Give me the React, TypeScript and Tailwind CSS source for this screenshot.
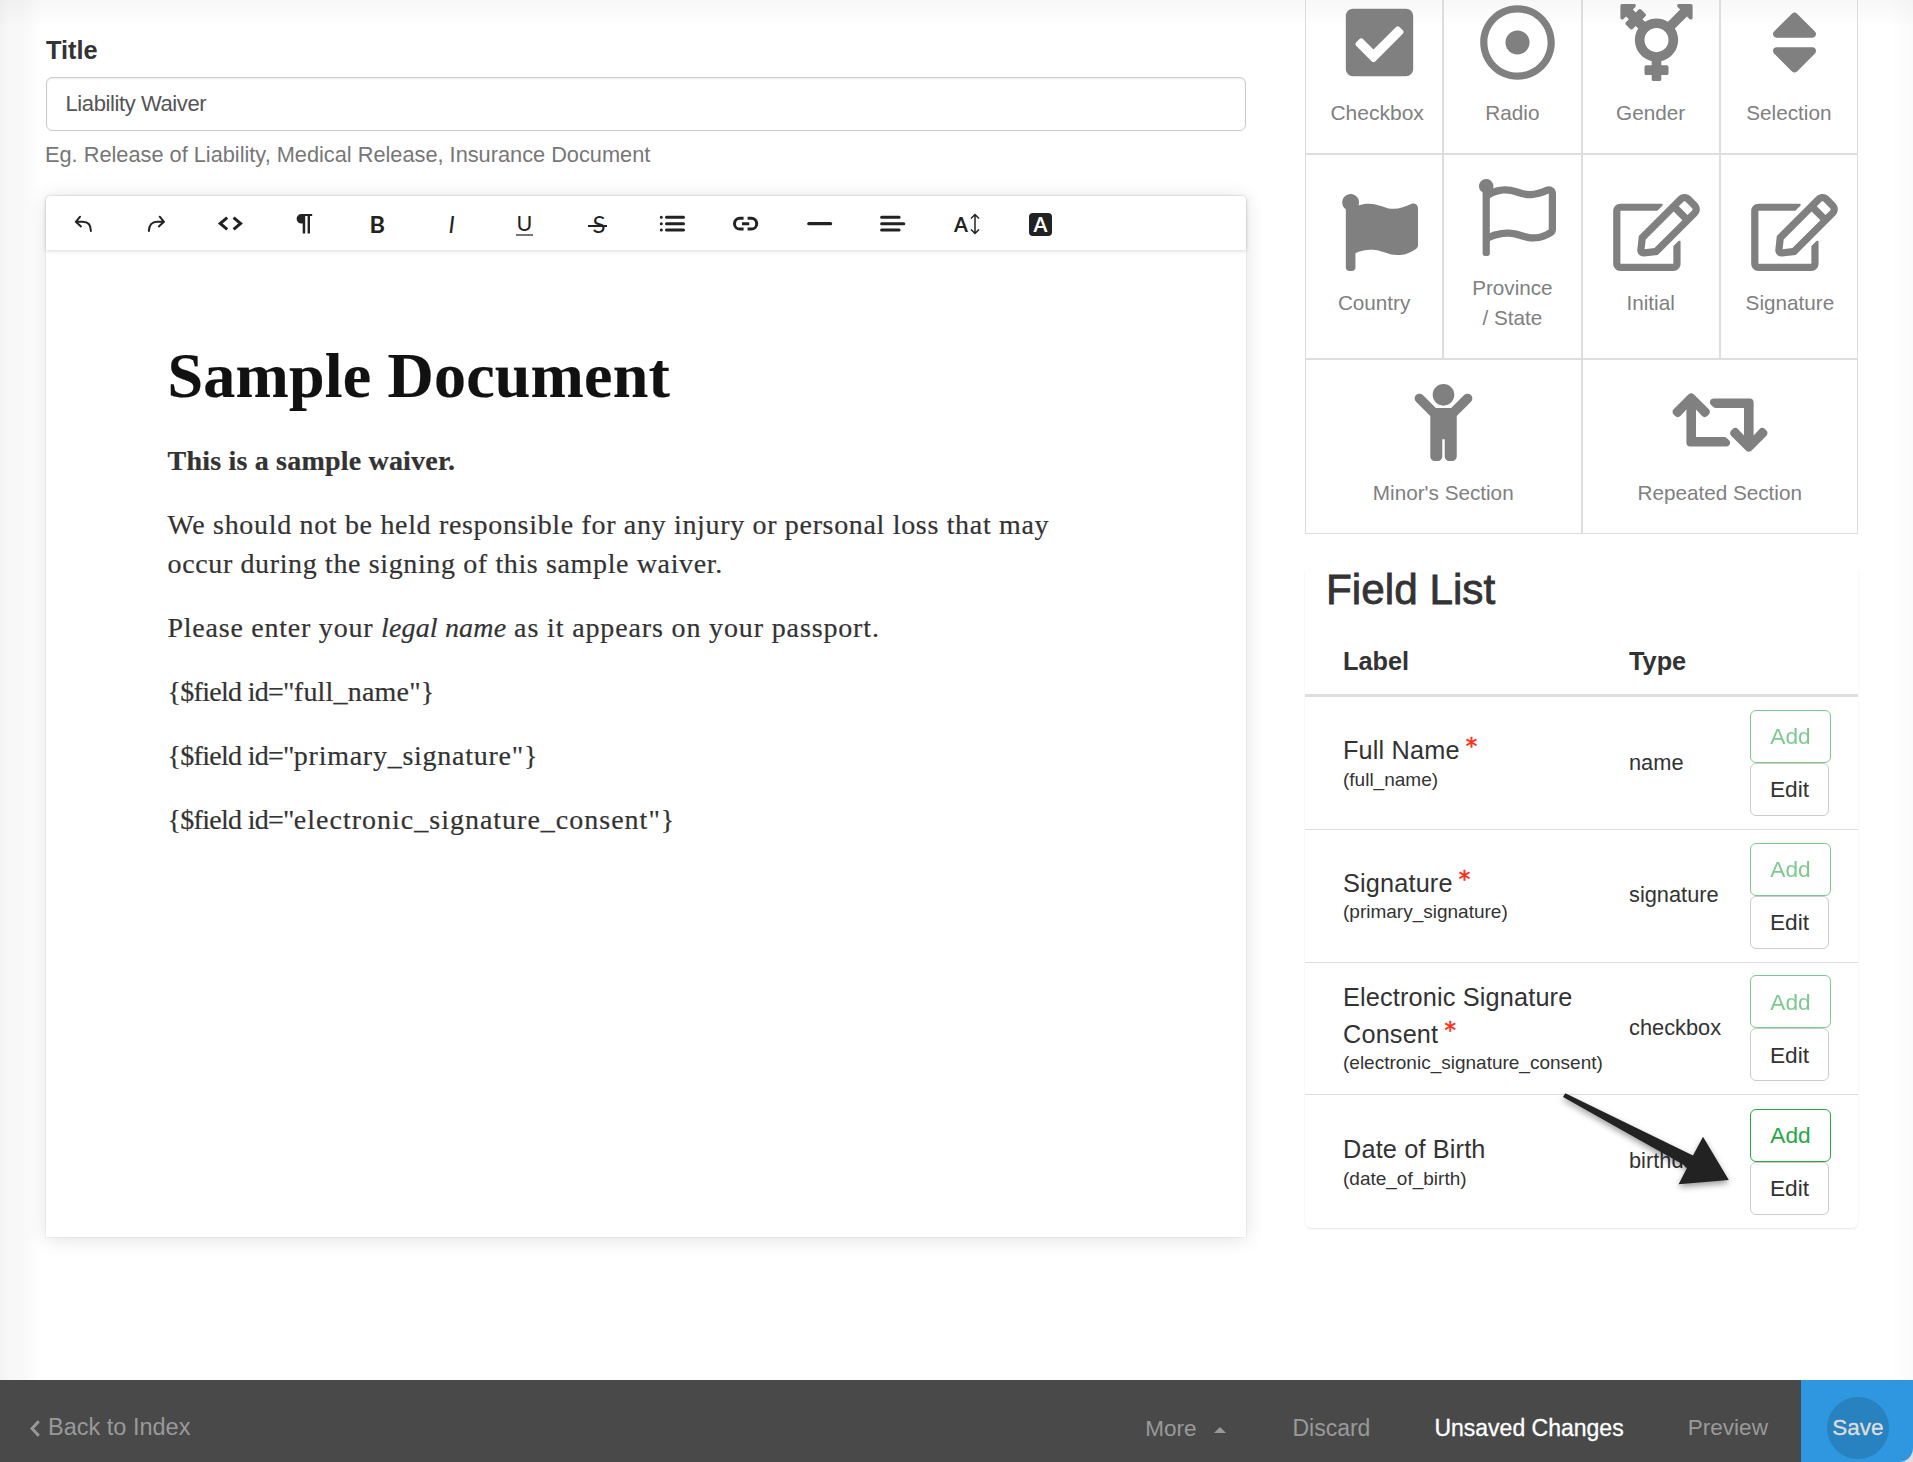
import { ReactNode } from 'react'
import { IconType } from 'react-icons'
import {
  FaCheckSquare,
  FaChild,
  FaFlag,
  FaRegDotCircle,
  FaRegEdit,
  FaRegFlag,
  FaRetweet,
  FaSort,
  FaTransgenderAlt,
} from 'react-icons/fa'

type Tile = {
  label: ReactNode
  icon: IconType
  iconClass: string
  wide?: boolean
}

const tiles: Tile[] = [
  {
    label: <span className="pl-1.5 text-[21px]">Checkbox</span>,
    icon: FaCheckSquare,
    iconClass: 'w-[77px] ml-2.5',
  },
  { label: 'Radio', icon: FaRegDotCircle, iconClass: 'w-[77px] ml-2.5' },
  { label: 'Gender', icon: FaTransgenderAlt, iconClass: 'w-[77px] ml-[11px]' },
  { label: 'Selection', icon: FaSort, iconClass: 'w-[77px] ml-[11px]' },
  { label: 'Country', icon: FaFlag, iconClass: 'w-[77px] ml-2.5' },
  {
    label: (
      <>
        Province
        <br />/ State
      </>
    ),
    icon: FaRegFlag,
    iconClass: 'w-[77px] ml-2.5',
  },
  { label: 'Initial', icon: FaRegEdit, iconClass: 'w-[87px] ml-3' },
  {
    label: <span className="pl-0.5">Signature</span>,
    icon: FaRegEdit,
    iconClass: 'w-[87px] ml-3',
  },
  { label: "Minor's Section", icon: FaChild, iconClass: 'w-[77px]', wide: true },
  { label: 'Repeated Section', icon: FaRetweet, iconClass: 'w-[96px]', wide: true },
]

type Field = {
  label: string
  id: string
  type: string
  required: boolean
  added: boolean
}

const fields: Field[] = [
  { label: 'Full Name', id: 'full_name', type: 'name', required: true, added: true },
  { label: 'Signature', id: 'primary_signature', type: 'signature', required: true, added: true },
  {
    label: 'Electronic Signature Consent',
    id: 'electronic_signature_consent',
    type: 'checkbox',
    required: true,
    added: true,
  },
  { label: 'Date of Birth', id: 'date_of_birth', type: 'birthday', required: false, added: false },
]

const Glyph = ({ children }: { children: ReactNode }) => (
  <svg
    viewBox="0 0 28 28"
    className="size-7"
    fill="none"
    stroke="#222"
    strokeWidth="2"
    strokeLinecap="round"
    strokeLinejoin="round"
  >
    {children}
  </svg>
)

const tools: { name: string; glyph: ReactNode }[] = [
  {
    name: 'Undo',
    glyph: (
      <Glyph>
        <path d="M11.1 6.7 6.8 11.8l5.2 4.6M7 11.8h6.7c5 0 8.2 3 8.2 9.2" />
      </Glyph>
    ),
  },
  {
    name: 'Redo',
    glyph: (
      <Glyph>
        <path d="M17.7 6.7l4.3 5.1-5.2 4.6M21.8 11.8h-6.700c-5 0-8.200 3-8.200 9.200" />
      </Glyph>
    ),
  },
  {
    name: 'Code',
    glyph: (
      <Glyph>
        <path
          strokeWidth="3"
          strokeLinecap="butt"
          strokeLinejoin="miter"
          d="M11.200 7.600 4.200 13.500l7 5.900M17.600 7.600l7 5.900-7 5.900"
        />
      </Glyph>
    ),
  },
  {
    name: 'Paragraph',
    glyph: (
      <Glyph>
        <path
          fill="#222"
          stroke="none"
          d="M11.400 4H22.200v2H20v17.400h-2.400V6h-2.400v17.400h-2.500v-9.800h-1.300A4.800 4.800 0 0 1 11.400 4z"
        />
      </Glyph>
    ),
  },
  { name: 'Bold', glyph: <b className="text-[23.5px] leading-7">B</b> },
  { name: 'Italic', glyph: <i className="ml-0.5 text-[24px] leading-7">I</i> },
  {
    name: 'Underline',
    glyph: (
      <span className="border-b-2 border-[#777] px-[0.5px] text-[21.5px] leading-[22px]">U</span>
    ),
  },
  {
    name: 'Strikethrough',
    glyph: (
      <span className="relative ml-0.5 text-[24px] leading-7">
        S
        <span className="absolute top-[15px] -left-1 h-0.5 w-[19px] bg-[#222]" />
      </span>
    ),
  },
  {
    name: 'List',
    glyph: (
      <Glyph>
        <path strokeWidth="3" d="M8.5 7.3h17M8.5 13.7h17M8.5 20.1h17M3.3 7.3h.01M3.3 13.7h.01M3.3 20.1h.01" />
      </Glyph>
    ),
  },
  {
    name: 'Link',
    glyph: (
      <Glyph>
        <path
          strokeWidth="3"
          strokeLinecap="butt"
          d="M12.600 8.300H8.900a5.400 5.400 0 0 0 0 10.800h3.700M16.600 8.300H20.300a5.400 5.400 0 0 1 0 10.800h-3.700M11 13.700h7.200"
        />
      </Glyph>
    ),
  },
  {
    name: 'Line',
    glyph: (
      <Glyph>
        <path strokeWidth="3.2" d="M3.8 13.7h21.8" />
      </Glyph>
    ),
  },
  {
    name: 'Align',
    glyph: (
      <Glyph>
        <path strokeWidth="3" d="M3.6 7.3h17.5M3.6 13.7H25.8M3.6 20.1h17.5" />
      </Glyph>
    ),
  },
  {
    name: 'Font size',
    glyph: (
      <span className="flex items-center gap-0.5 pl-0.5">
        <b className="text-[20px] leading-7">A</b>
        <svg viewBox="0 0 10 22" className="h-[22px] w-2.5" fill="none" stroke="#222" strokeWidth="1.5">
          <path d="M5 1.5v19M1 5.5l4-4 4 4M1 16.5l4 4 4-4" />
        </svg>
      </span>
    ),
  },
  {
    name: 'Text color',
    glyph: (
      <b className="ml-0.5 h-[23px] w-[22.5px] rounded bg-[#222] text-center text-[20px] leading-[22px] text-white">
        A
      </b>
    ),
  },
]

const Toolbar = () => (
  <div className="flex h-[54px] items-center rounded-t bg-white pt-0.5 font-[Lato,sans-serif] text-[#222] shadow-[0_1px_4px_rgba(0,0,0,0.17)]">
    {tools.map((tool) => (
      <button
        key={tool.name}
        type="button"
        title={tool.name}
        className="flex w-[73.6px] items-center justify-center"
      >
        {tool.glyph}
      </button>
    ))}
  </div>
)

const Editor = () => (
  <div className="mt-[26px] h-[1041px] rounded-t bg-white shadow-[0_0_1px_rgba(0,0,0,0.35),0_2px_20px_rgba(0,0,0,0.12)]">
    <Toolbar />
    <div className="flex flex-col gap-[25px] pt-[90px] pl-[121.5px] font-['Liberation_Serif',serif] text-[28px] leading-[39px] whitespace-nowrap text-[#333] [-webkit-text-stroke:0.2px_#333]">
      <h1 className="mb-1 text-[64px] leading-[72px] font-bold tracking-[0.2px] text-[#111]">
        Sample Document
      </h1>
      <p className="font-bold tracking-[0.2px]">This is a sample waiver.</p>
      <p className="tracking-[0.67px]">
        We should not be held responsible for any injury or personal loss that may
        <br />
        <span className="tracking-[0.63px]">occur during the signing of this sample waiver.</span>
      </p>
      <p className="tracking-[0.76px]">
        Please enter your <i className="tracking-[0.16px]">legal name</i>
        <span className="tracking-[0.86px]"> as it appears on your passport.</span>
      </p>
      <p>
        <span className="tracking-[-0.7px]">{'{$field id="'}</span>
        <span className="tracking-[0.2px]">{'full_name"}'}</span>
      </p>
      <p>
        <span className="tracking-[-0.7px]">{'{$field id="'}</span>
        <span className="tracking-[0.74px]">{'primary_signature"}'}</span>
      </p>
      <p>
        <span className="tracking-[-0.7px]">{'{$field id="'}</span>
        <span className="tracking-[1px]">{'electronic_signature_consent"}'}</span>
      </p>
    </div>
  </div>
)

const FieldTiles = () => (
  <div className="grid grid-cols-4 grid-rows-[175px_205px_175px] text-[20.7px] leading-[30px] text-[#808080]">
    {tiles.map((tile, i) => (
      <div
        key={i}
        className={
          tile.wide
            ? 'col-span-2 flex flex-col items-center justify-center border border-[#ddd] pb-0.5'
            : 'flex flex-col items-center justify-center border border-[#ddd] pb-0.5'
        }
      >
        <tile.icon className={`h-[77px] ${tile.iconClass}`} />
        <div className="mt-[17px] text-center">{tile.label}</div>
      </div>
    ))}
  </div>
)

const FieldRow = ({ field }: { field: Field }) => (
  <div className="flex h-[132.8px] items-center border-b border-[#ddd] pl-[38px] last:border-b-0">
    <div className="w-[286px] pb-1">
      <div className="w-[250px] text-[25.3px] leading-[36.5px] tracking-[0.15px]">
        {field.label}{' '}
        {field.required && (
          <span className="-ml-px inline-block align-[5px] font-['DejaVu_Sans',sans-serif] text-[23px] leading-none text-[#ff2a12] [-webkit-text-stroke:0.5px_#ff2a12]">
            *
          </span>
        )}
      </div>
      <div className="text-[19px] leading-[21px]">({field.id})</div>
    </div>
    <div className="w-[121px] text-[21.8px]">{field.type}</div>
    <div className="flex flex-col items-start text-[22.7px]">
      <button
        type="button"
        disabled={field.added}
        className="h-[53px] w-[81px] rounded-md border border-[#28a745] text-[#28a745] disabled:opacity-60"
      >
        Add
      </button>
      <button type="button" className="h-[53px] w-[79px] rounded-md border border-[#ccc]">
        Edit
      </button>
    </div>
  </div>
)

const FieldList = () => (
  <div className="relative mt-9 rounded-b-md text-[#333] shadow-[0_1px_2px_rgba(0,0,0,0.1)]">
    <h2 className="pl-[21px] text-[42.3px] leading-10 [-webkit-text-stroke:0.8px_#333]">Field List</h2>
    <div className="mt-5 flex h-[67px] items-center border-b-3 border-[#ddd] pl-[38px] text-[25.3px] font-bold">
      <div className="w-[286px]">Label</div>
      <div>Type</div>
    </div>
    <div>
      {fields.map((field) => (
        <FieldRow key={field.id} field={field} />
      ))}
    </div>

    {/* pointer to the last Edit button */}
    <svg
      viewBox="0 0 180 110"
      className="absolute right-[118px] bottom-[39px] h-[110px] w-[180px] drop-shadow-[0_3px_3px_rgba(0,0,0,0.4)]"
      fill="#222"
    >
      <path d="M5.3 14.3 3 18l124.5 70-8.9 17.3 50.2-4.3L143 57.7l-10 18.8z" />
    </svg>
  </div>
)

const Footer = () => (
  <footer className="flex h-[82px] bg-[#494949] pt-3.5 text-[23px] text-[#999]">
    <a className="flex flex-1 items-center gap-2 pl-[30px] text-[23.5px]">
      <svg viewBox="0 0 10 17" className="h-[17px] w-2.5" fill="none" stroke="#999" strokeWidth="3">
        <path d="M8.8 1.2 2 8.5l6.8 7.3" />
      </svg>
      Back to Index
    </a>
    <div className="flex items-center">
      <span className="mr-[18px] pt-0.5 text-[22.5px]">More</span>
      <span className="mt-1 mr-[66px] size-0 border-x-[6px] border-b-[6px] border-x-transparent border-b-[#999]" />
      <span className="mr-16">Discard</span>
      <span className="mr-[64px] text-white [-webkit-text-stroke:0.3px_#fff]">Unsaved Changes</span>
      <span className="mr-[33px] text-[22.6px]">Preview</span>
    </div>
    {/* the page corner shows behind the rounded button */}
    <div className="-mt-3.5 bg-[linear-gradient(#2e97df_50%,#ddd_50%)]">
      <div className="flex h-full w-28 items-center justify-center rounded-br-[14px] bg-[#2e97df] pt-3.5 pl-0.5">
        <span className="flex size-[62px] items-center justify-center rounded-full bg-[#2882bf] text-[22.5px] text-[#ddd] [-webkit-text-stroke:0.3px_#ddd]">
          Save
        </span>
      </div>
    </div>
  </footer>
)

export default function App() {
  return (
    <div className="flex h-[1462px] w-[1913px] flex-col overflow-hidden bg-white font-['Liberation_Sans',sans-serif]">
      <main className="flex h-[1380px] bg-[linear-gradient(to_right,rgba(90,110,140,0.03),rgba(90,110,140,0)_8px),linear-gradient(to_right,rgba(0,0,0,0.03),rgba(0,0,0,0.028)_22px,rgba(0,0,0,0)_42px),linear-gradient(to_bottom,rgba(0,20,10,0.03),rgba(0,0,0,0.018)_10px,rgba(0,0,0,0)_28px),linear-gradient(to_left,rgba(0,0,0,0.02),rgba(0,0,0,0)_22px)] pl-[46px]">
        <div className="w-[1200px] pt-8">
          <label className="block text-[25.3px] leading-9 font-bold text-[#333]">Title</label>
          <input
            defaultValue="Liability Waiver"
            className="mt-[9px] block h-[54px] w-full rounded-md border border-[#ccc] bg-white px-[18.5px] text-[22px] tracking-[-0.4px] text-[#555] shadow-[inset_0_1px_2px_rgba(0,0,0,0.08)]"
          />
          <p className="mt-2 -ml-px text-[21.75px] leading-[31px] text-[#777]">
            Eg. Release of Liability, Medical Release, Insurance Document
          </p>
          <Editor />
        </div>
        <div className="-mt-[21px] ml-[59px] w-[553px]">
          <FieldTiles />
          <FieldList />
        </div>
      </main>
      <Footer />
    </div>
  )
}
